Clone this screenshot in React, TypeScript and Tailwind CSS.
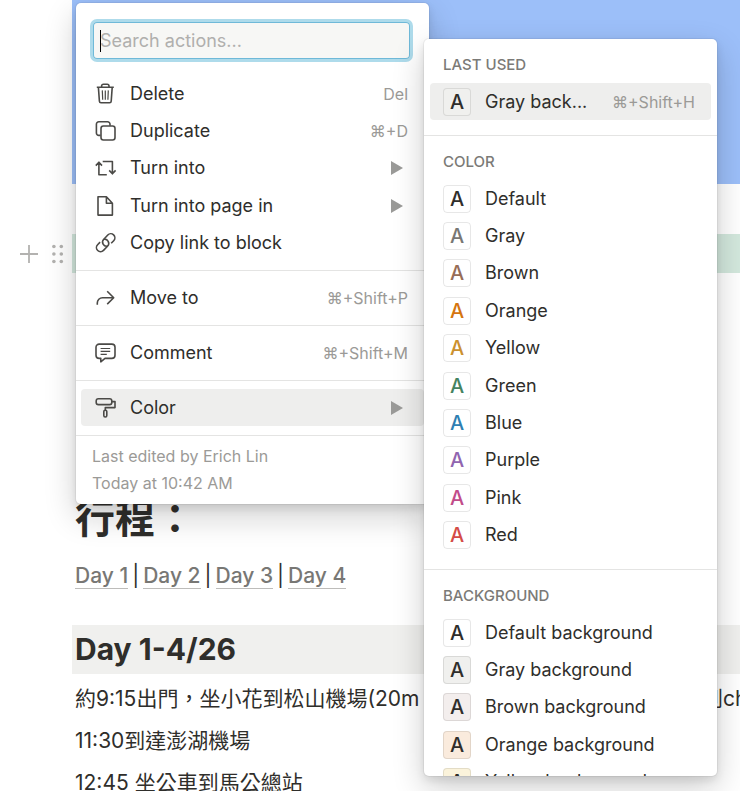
import type { ReactNode } from "react";

const ICONS: Record<string, ReactNode> = {
  trash: (
    <>
      <path d="M1.8 4.2h17M6.6 4.2V3a1.8 1.8 0 0 1 1.8-1.8h3.8A1.8 1.8 0 0 1 14 3v1.2M3.4 4.4l1 13.8a1.6 1.6 0 0 0 1.6 1.5h8.6a1.6 1.6 0 0 0 1.6-1.5l1-13.8" />
      <path d="m7.3 7.4.4 9.4M10.3 7.4v9.4M13.3 7.4l-.4 9.4" strokeWidth="1.2" />
    </>
  ),
  duplicate: (
    <>
      <rect x="6" y="6" width="14" height="14" rx="2.4" />
      <path d="M5.6 15.4H3.8a2.4 2.4 0 0 1-2.4-2.4V4.2a2.4 2.4 0 0 1 2.4-2.4h8.8A2.4 2.4 0 0 1 15 4.2v1.6" />
    </>
  ),
  turn: <path d="M.8 8.6 3.9 5.2 7 8.6M3.9 5.4v12.4h7.9M7.7 4.5h9.7v12.2M14.2 13.4l3.2 3.4 3.2-3.4" />,
  page: <path d="M11.4 1.7H3v18.4h14.4V8.2zv6.5h6" />,
  link: (
    <>
      <path d="M12.6 14.1a4.1 4.1 0 0 1-3.8-6.9l4-4.2a4.1 4.1 0 0 1 5.9 5.7l-2.5 2.6" />
      <path d="M8.7 7.3a4.1 4.1 0 0 1 3.8 6.9l-4 4.2a4.1 4.1 0 0 1-5.9-5.7l2.5-2.6" />
    </>
  ),
  move: <path d="M2.3 17.8v-1.9a5.2 5.2 0 0 1 5.2-5.2h11M12.2 4.3l6.5 6.4-6.5 6.4" />,
  comment: (
    <>
      <path d="M4.2 2.1h12.6a3.2 3.2 0 0 1 3.2 3.2v7.9a3.2 3.2 0 0 1-3.2 3.2H10l-4.2 3.4v-3.4H4.2A3.2 3.2 0 0 1 1 13.2V5.3a3.2 3.2 0 0 1 3.2-3.2z" />
      <path d="M5.6 6.5h9.6M5.6 9.4h9.6M5.6 12.3h6.2" strokeWidth="1.2" />
    </>
  ),
  roller: (
    <>
      <rect x="1.2" y="1.7" width="15.6" height="5.9" rx="2.2" />
      <path d="M16.8 4.6h3.2v6h-9.7v2.7" />
      <rect x="8.8" y="13.2" width="3" height="6.8" rx="1.4" />
    </>
  ),
};

function Icon({ name }: { name: string }) {
  return (
    <svg
      viewBox="0 0 22 22"
      className="size-[22px] shrink-0"
      fill="none"
      stroke="#4b4a47"
      strokeWidth="1.6"
      strokeLinejoin="round"
      aria-hidden="true"
    >
      {ICONS[name]}
    </svg>
  );
}

function Triangle() {
  return (
    <svg viewBox="0 0 12 14" className="mr-[5px] h-[14px] w-3 shrink-0" aria-hidden="true">
      <path d="M0 0 12 7 0 14z" fill="#9a9a98" />
    </svg>
  );
}

type Action = { icon: string; label: string; keys?: string; submenu?: boolean; active?: boolean };

const BLOCK_ACTIONS: Action[] = [
  { icon: "trash", label: "Delete", keys: "Del" },
  { icon: "duplicate", label: "Duplicate", keys: "⌘+D" },
  { icon: "turn", label: "Turn into", submenu: true },
  { icon: "page", label: "Turn into page in", submenu: true },
  { icon: "link", label: "Copy link to block" },
];

const SINGLE_ACTIONS: Action[] = [
  { icon: "move", label: "Move to", keys: "⌘+Shift+P" },
  { icon: "comment", label: "Comment", keys: "⌘+Shift+M" },
  { icon: "roller", label: "Color", submenu: true, active: true },
];

function ActionRow({ icon, label, keys, submenu, active }: Action) {
  return (
    <button
      type="button"
      className={`flex min-h-[37px] items-center gap-[13px] rounded-[4px] pr-4 pl-[14px] text-left ${active ? "bg-[#eeeeed]" : ""}`}
    >
      <Icon name={icon} />
      <span className="flex-1 text-[18px] leading-6">{label}</span>
      {keys && <span className="text-[16px] leading-6 text-[#9b9a97]">{keys}</span>}
      {submenu && <Triangle />}
    </button>
  );
}

type Swatch = { label: string; tone: string };

const COLORS: Swatch[] = [
  { label: "Default", tone: "text-[#2f2e2b]" },
  { label: "Gray", tone: "text-[#787774]" },
  { label: "Brown", tone: "text-[#976d57]" },
  { label: "Orange", tone: "text-[#d5750f]" },
  { label: "Yellow", tone: "text-[#cb912f]" },
  { label: "Green", tone: "text-[#448361]" },
  { label: "Blue", tone: "text-[#2f7fb2]" },
  { label: "Purple", tone: "text-[#9065b0]" },
  { label: "Pink", tone: "text-[#c14c8a]" },
  { label: "Red", tone: "text-[#d44c47]" },
];

const BACKGROUNDS: Swatch[] = [
  { label: "Default background", tone: "bg-white" },
  { label: "Gray background", tone: "bg-[#f0f0ee]" },
  { label: "Brown background", tone: "bg-[#f3eeed]" },
  { label: "Orange background", tone: "bg-[#faebdd]" },
  { label: "Yellow background", tone: "bg-[#fbf3db]" },
];

function SwatchRow({ label, tone, keys }: Swatch & { keys?: string }) {
  return (
    <button
      type="button"
      className={`flex min-h-[37px] items-center gap-[14px] rounded-[4px] pr-4 pl-[13px] text-left ${keys ? "bg-[#eeeeed]" : ""}`}
    >
      <span
        className={`flex size-7 shrink-0 items-center justify-center rounded-[4px] border border-[#0f0f0f]/10 text-[20px] leading-6 font-medium ${tone}`}
      >
        A
      </span>
      <span className="flex-1 text-[18px] leading-6 whitespace-nowrap">{label}</span>
      {keys && <span className="text-[16px] leading-6 text-[#9b9a97]">{keys}</span>}
    </button>
  );
}

function Section({ title, children }: { title: string; children: ReactNode }) {
  return (
    <section className="border-b border-[#e4e4e3] pt-4 pb-[15px] last:border-0">
      <h3 className="mb-2 px-[19px] text-[15px] leading-5 font-medium text-[#7b7a77]">{title}</h3>
      {children}
    </section>
  );
}

const POPUP =
  "absolute rounded-[5px] bg-white shadow-[0_0_0_1px_rgba(15,15,15,0.05),0_4px_8px_rgba(15,15,15,0.1),0_12px_32px_rgba(15,15,15,0.2)]";

function ActionMenu() {
  return (
    <div className={`${POPUP} top-[3px] left-[76px] w-[353px]`}>
      <div className="relative pt-[19px] pr-[19px] pb-2 pl-[17px]">
        <input
          type="text"
          aria-label="Search actions"
          placeholder="Search actions..."
          className="block h-[37px] w-full rounded-[4px] bg-[#f7f7f5] px-[7px] text-[18px] leading-6 shadow-[inset_0_0_0_1px_#6fb9d8,0_0_0_3px_#aedbeb] outline-none placeholder:text-[#b0afad]"
        />
        <span className="absolute top-[27px] left-6 h-[22px] w-px bg-black" />
      </div>
      <div className="border-b border-[#e4e4e3] px-[5px] py-2">
        <div className="grid h-[187px] auto-rows-fr">
          {BLOCK_ACTIONS.map((action) => (
            <ActionRow key={action.label} {...action} />
          ))}
        </div>
      </div>
      {SINGLE_ACTIONS.map((action) => (
        <div key={action.label} className="grid border-b border-[#e4e4e3] px-[5px] pt-2 pb-[9px]">
          <ActionRow {...action} />
        </div>
      ))}
      <p className="px-4 py-[7px] text-[16px] leading-[27px] text-[#9b9a97]">
        Last edited by Erich Lin
        <br />
        Today at 10:42 AM
      </p>
    </div>
  );
}

function ColorMenu() {
  return (
    <div className={`${POPUP} top-[39px] left-[424px] h-[737px] w-[293px] overflow-hidden`}>
      <Section title="LAST USED">
        <div className="grid px-[6px]">
          <SwatchRow label="Gray back..." tone="bg-[#f0f0ee]" keys="⌘+Shift+H" />
        </div>
      </Section>
      <Section title="COLOR">
        <div className="grid h-[374px] auto-rows-fr px-[6px]">
          {COLORS.map((color) => (
            <SwatchRow key={color.label} {...color} />
          ))}
        </div>
      </Section>
      <Section title="BACKGROUND">
        <div className="grid h-[187px] auto-rows-fr px-[6px]">
          {BACKGROUNDS.map((color) => (
            <SwatchRow key={color.label} {...color} />
          ))}
        </div>
      </Section>
    </div>
  );
}

function BlockHandles() {
  return (
    <div className="flex w-[72px] items-center justify-end gap-[14px] pr-2">
      <button type="button" aria-label="Add block">
        <svg viewBox="0 0 18 18" className="size-[18px]" stroke="#b3b2b0" strokeWidth="1.8">
          <path d="M9 0v18M0 9h18" />
        </svg>
      </button>
      <button type="button" aria-label="Drag block">
        <svg viewBox="0 0 12 20" className="h-5 w-3" fill="#b3b2b0">
          {[2.5, 10, 17.5].map((y) => (
            <g key={y}>
              <circle cx="1.9" cy={y} r="1.8" />
              <circle cx="9.3" cy={y} r="1.8" />
            </g>
          ))}
        </svg>
      </button>
    </div>
  );
}

export default function App() {
  return (
    <div className="relative h-screen overflow-hidden bg-white font-['Inter','Noto_Sans_CJK_TC',sans-serif] text-[#2f2e2b]">
      <main>
        <div className="ml-[72px] h-[184px] bg-[#9cbff9]" />
        <div className="mt-[50px] flex h-[39px]">
          <BlockHandles />
          <div className="flex-1 bg-[#d3e8dd]" />
        </div>
        <div className="mt-[220px] ml-[72px]">
          <h1 className="px-[3px] text-[40px] leading-[52px] font-bold">行程：</h1>
          <nav className="mt-[18px] flex gap-1 px-[3px] text-[21px] leading-[25px] font-medium">
            {["Day 1", "Day 2", "Day 3", "Day 4"].map((day, i) => (
              <span key={day} className="flex gap-1">
                {i > 0 && <span className="font-normal">|</span>}
                <a href="#day" className="border-b border-[#bdbcba] text-[#787774]">
                  {day}
                </a>
              </span>
            ))}
          </nav>
          <h2 className="mt-[36px] bg-[#f0f0ee] px-[3px] text-[30px] leading-[49px] font-bold">Day 1-4/26</h2>
          <div className="mt-1 pl-[3px] text-[21px] leading-[42px] whitespace-nowrap">
            <p className="flex justify-between">
              <span>約9:15出門，坐小花到松山機場(20m</span>
              <span className="w-[38px] shrink-0">到ch</span>
            </p>
            <p>11:30到達澎湖機場</p>
            <p>12:45 坐公車到馬公總站</p>
          </div>
        </div>
      </main>
      <ActionMenu />
      <ColorMenu />
    </div>
  );
}
